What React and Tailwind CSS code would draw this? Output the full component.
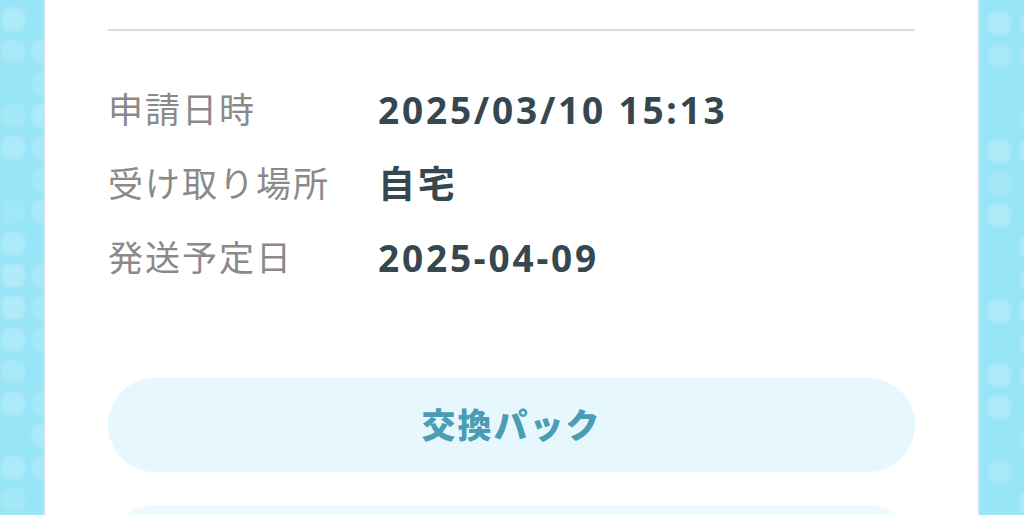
const tiles = [
  [2, 8, 0.3], [2, 40, 0.22], [32, 40, 0.25], [32, 72, 0.18], [2, 104, 0.18], [32, 104, 0.3],
  [2, 136, 0.28], [32, 136, 0.22], [32, 168, 0.18], [2, 200, 0.12], [32, 200, 0.25],
  [2, 232, 0.28], [2, 264, 0.35], [32, 264, 0.22], [2, 296, 0.35], [32, 296, 0.18],
  [2, 328, 0.28], [32, 328, 0.18], [2, 360, 0.22], [2, 392, 0.28], [32, 392, 0.18],
  [32, 424, 0.28], [2, 456, 0.28], [32, 456, 0.22], [2, 488, 0.18],
];

const tilesRight = [
  [8, 12, 0.28], [40, 12, 0.22], [8, 44, 0.22], [40, 44, 0.18], [40, 108, 0.18], [8, 140, 0.3],
  [40, 140, 0.28], [8, 172, 0.18], [8, 204, 0.3], [40, 236, 0.28], [40, 268, 0.22],
  [8, 300, 0.28], [40, 300, 0.3], [40, 332, 0.22], [8, 364, 0.28], [40, 364, 0.22],
  [8, 396, 0.28], [40, 428, 0.18], [8, 460, 0.22], [40, 492, 0.28],
];

const Pattern = ({ data, width, id }) => (
  <svg width={width} height="515" className="block">
    <defs>
      <filter id={id} x="-20%" y="-20%" width="140%" height="140%">
        <feGaussianBlur stdDeviation="1.5" />
      </filter>
    </defs>
    <g filter={`url(#${id})`}>
      {data.map(([x, y, o], i) => (
        <rect key={i} x={x} y={y} width="23" height="23" rx="7" fill="#ffffff" opacity={o * 0.7} />
      ))}
    </g>
  </svg>
);

const rows = [
  { label: "申請日時", value: "2025/03/10 15:13" },
  { label: "受け取り場所", value: "自宅" },
  { label: "発送予定日", value: "2025-04-09" },
];

const App = () => {
  return (
    <div
      className="flex w-[1024px] h-[515px] overflow-hidden bg-[#98e5f7]"
      style={{ fontFamily: '"Noto Sans", "Noto Sans CJK JP", sans-serif' }}
    >
      <div className="w-[43px] shrink-0 overflow-hidden">
        <Pattern data={tiles} width={43} id="blurL" />
      </div>

      <div className="flex-1 bg-white border-x-2 border-[#d3dcec] px-[63px]">
        <div className="mt-[29px] h-[2px] bg-[#dcdcdc]" />

        <div className="mt-[42px]">
          {rows.map((row) => (
            <div key={row.label} className="flex items-center h-[74px]">
              <span className="w-[270px] text-[35px] tracking-[2px] text-[#8a8a8a]">
                {row.label}
              </span>
              <span className="text-[37px] font-bold tracking-[2.8px] text-[#37474f]">
                {row.value}
              </span>
            </div>
          ))}
        </div>

        <button className="mt-[83px] w-full h-[94px] rounded-full bg-[#e6f8fd] flex items-center justify-center text-[34px] font-black tracking-[2px] text-[#4b9db5]">
          交換パック
        </button>
        <div className="mt-[33px] w-full h-[94px] rounded-full bg-[#eefafd]" />
      </div>

      <div className="w-[44px] shrink-0 overflow-hidden">
        <Pattern data={tilesRight} width={44} id="blurR" />
      </div>
    </div>
  );
};

export default App;
